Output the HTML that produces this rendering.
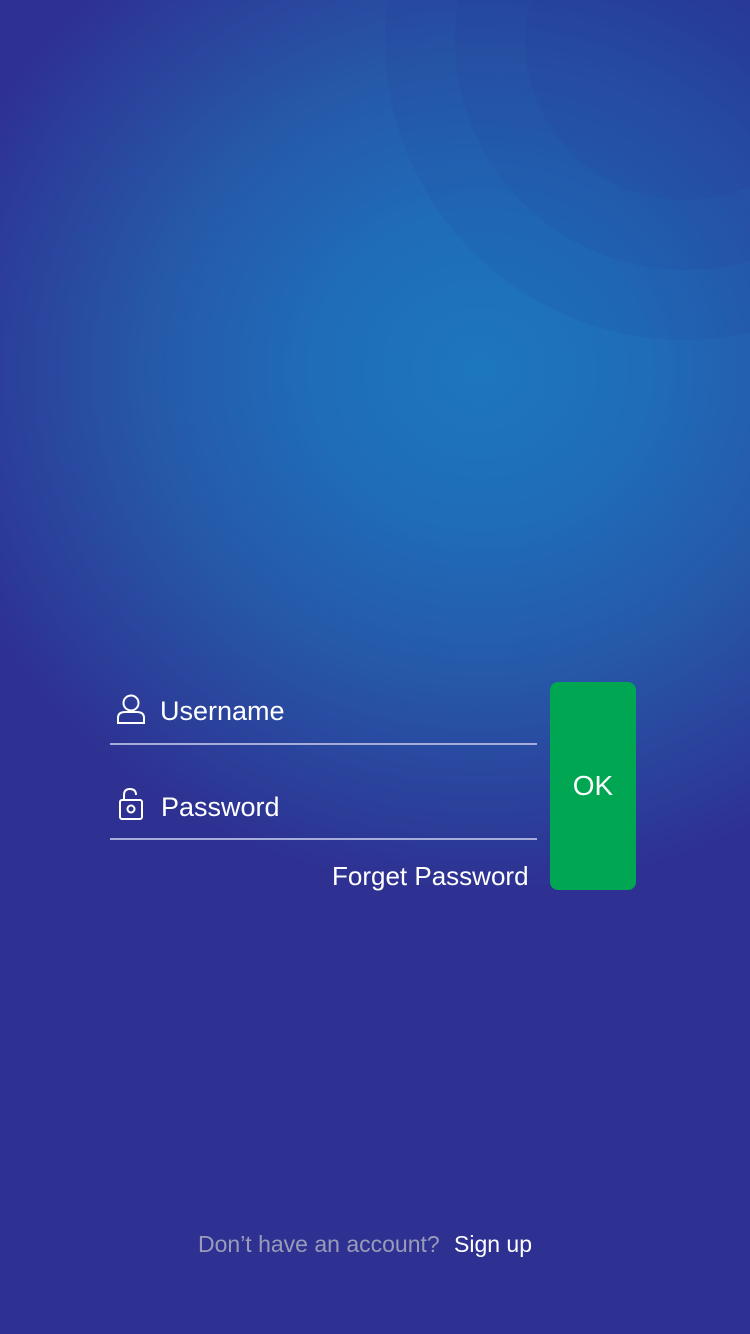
<!DOCTYPE html>
<html><head><style>
html,body{margin:0;padding:0}
body{width:750px;height:1334px;position:relative;overflow:hidden;font-family:"Liberation Sans",sans-serif;
background:#2e3192;}
.bg{position:absolute;left:0;top:0;width:750px;height:1334px;
background:radial-gradient(ellipse 560px 520px at 480px 370px,#1d77be 0%,#1f6cb8 30%,#2658a8 60%,#2e3192 100%);}
.c{position:absolute;border-radius:50%;background:rgba(40,40,140,0.08)}
.line{position:absolute;left:110px;width:427px;height:2px;background:#a7addb}
.t{position:absolute;color:#fff;font-size:27px}
.ok{position:absolute;left:550px;top:682px;width:86px;height:208px;background:#00a651;border-radius:8px;color:#fff;font-size:28px;display:flex;align-items:center;justify-content:center}
</style></head><body>
<div class="bg"></div>
<div class="c" style="left:385px;top:-260px;width:600px;height:600px"></div>
<div class="c" style="left:455px;top:-190px;width:460px;height:460px"></div>
<div class="c" style="left:525px;top:-120px;width:320px;height:320px"></div>
<svg style="position:absolute;left:114px;top:694px" width="34" height="30" viewBox="0 0 34 30" fill="none" stroke="#fff" stroke-width="2">
<circle cx="17" cy="9" r="7.5"/><path d="M4 29 V24 Q4 18 11 18 H23 Q30 18 30 24 V29 Z"/></svg>
<div class="t" style="left:160px;top:696px">Username</div>
<div class="line" style="top:743px"></div>
<svg style="position:absolute;left:118px;top:787px" width="26" height="34" viewBox="0 0 26 34" fill="none" stroke="#fff" stroke-width="2">
<path d="M6 13 V8 Q6 2 12 2 Q18 2 18 8"/><rect x="2" y="13" width="22" height="19" rx="2"/><circle cx="13" cy="22" r="3.5"/></svg>
<div class="t" style="left:161px;top:792px">Password</div>
<div class="line" style="top:838px"></div>
<div class="t" style="left:332px;top:861px;font-size:26px">Forget Password</div>
<div class="ok">OK</div>
<div style="position:absolute;left:198px;top:1231px;font-size:23px;color:#9a9bb8">Don’t have an account?</div>
<div style="position:absolute;left:454px;top:1231px;font-size:23px;color:#fff">Sign up</div>
</body></html>
